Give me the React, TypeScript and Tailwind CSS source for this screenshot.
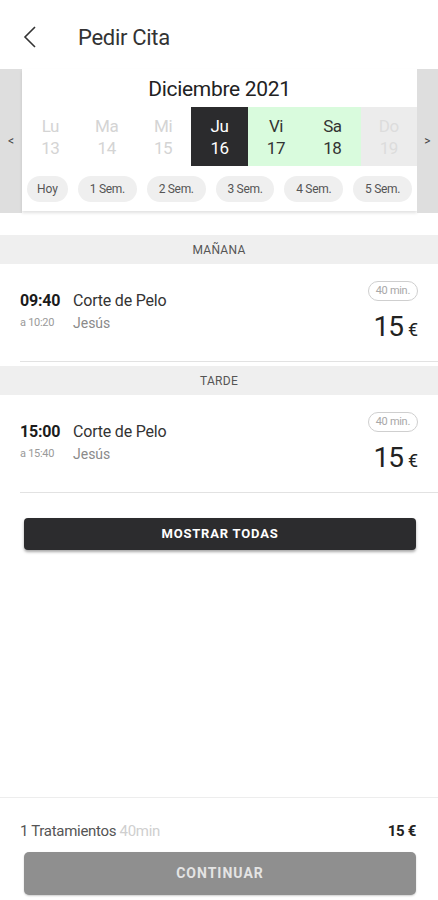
const font = { fontFamily: 'Roboto, "Liberation Sans", sans-serif' }

type Day = {
    name: string
    num: number
    className: string
}

type Slot = {
    start: string
    end: string
    service: string
    staff: string
}

const days: Day[] = [
    { name: 'Lu', num: 13, className: 'text-[#d4d4d4]' },
    { name: 'Ma', num: 14, className: 'text-[#d4d4d4]' },
    { name: 'Mi', num: 15, className: 'text-[#d4d4d4]' },
    { name: 'Ju', num: 16, className: 'bg-[#2b2b2d] text-white' },
    { name: 'Vi', num: 17, className: 'bg-[#d9fbdd] text-[#333]' },
    { name: 'Sa', num: 18, className: 'bg-[#d9fbdd] text-[#333]' },
    { name: 'Do', num: 19, className: 'bg-[#ececec] text-[#dcdcdc]' },
]

const weeks = ['1 Sem.', '2 Sem.', '3 Sem.', '4 Sem.', '5 Sem.']

function SlotRow({ slot }: { slot: Slot }) {
    return (
        <div>
            <div className="flex justify-between pl-[20px] pr-[20px] h-[97px]">
                <div className="pt-[27px]">
                    <div className="flex items-center h-[20px] text-[16px] tracking-[-0.2px]">
                        <span className="font-bold text-[#1b1b1b] w-[53px]">{slot.start}</span>
                        <span className="text-[#333]">{slot.service}</span>
                    </div>
                    <div className="flex items-center h-[18px] mt-[3px]">
                        <span className="text-[11px] text-[#9a9a9a] w-[53px] tracking-[-0.3px]">a {slot.end}</span>
                        <span className="text-[14px] text-[#8a8a8a]">{slot.staff}</span>
                    </div>
                </div>
                <div className="pt-[17px] flex flex-col items-end">
                    <div className="h-[20px] px-[7px] border border-[#cfcfcf] rounded-full text-[11px] text-[#a8a8a8] flex items-center tracking-[-0.3px]">40 min.</div>
                    <div className="mt-[11px] h-[30px] flex items-baseline text-[#222]">
                        <span className="text-[28px] leading-[30px] tracking-[-1px]">15</span>
                        <span className="text-[18px] ml-[5px]">€</span>
                    </div>
                </div>
            </div>
            <div className="ml-[20px] border-t border-[#e2e2e2]"></div>
        </div>
    )
}

function SectionBar({ title }: { title: string }) {
    return (
        <div className="h-[29px] bg-[#efefef] flex items-center justify-center text-[12px] text-[#555] tracking-[0.3px]">
            {title}
        </div>
    )
}

export default function App() {
    return (
        <div style={font} className="w-[438px] h-[900px] bg-white flex flex-col overflow-hidden">
            {/* Header */}
            <div className="h-[69px] flex items-center pt-[5px]">
                <svg width="16" height="22" viewBox="0 0 16 22" className="ml-[22px]">
                    <path d="M13 1 L3 11 L13 21" fill="none" stroke="#333" strokeWidth="1.6" />
                </svg>
                <span className="ml-[40px] text-[22px] text-[#333] tracking-[-0.3px]">Pedir Cita</span>
            </div>

            {/* Calendar */}
            <div className="flex h-[144px]">
                <div className="w-[22px] bg-[#dedede] flex items-center justify-center text-[12px] text-[#444]">&lt;</div>
                <div className="flex-1 bg-white shadow-[0_2px_3px_rgba(0,0,0,0.12)] mb-[2px]">
                    <div className="h-[38px] flex items-center justify-center text-[21px] text-[#222] pt-[4px] tracking-[-0.3px]">Diciembre 2021</div>
                    <div className="grid grid-cols-7 h-[59px]">
                        {days.map((d, i) => (
                            <div key={i} className={`flex flex-col items-center justify-center text-[17px] leading-[22px] tracking-[-0.5px] ${d.className}`}>
                                <span>{d.name}</span>
                                <span>{d.num}</span>
                            </div>
                        ))}
                    </div>
                    <div className="flex gap-[10px] px-[5px] pt-[10px]">
                        <div className="w-[41px] h-[26px] rounded-full bg-[#efefef] flex items-center justify-center text-[12px] text-[#555]">Hoy</div>
                        {weeks.map((w, i) => (
                            <div key={i} className="flex-1 h-[26px] rounded-full bg-[#efefef] flex items-center justify-center text-[12px] text-[#555] tracking-[-0.3px]">{w}</div>
                        ))}
                    </div>
                </div>
                <div className="w-[21px] bg-[#dedede] flex items-center justify-center text-[12px] text-[#444]">&gt;</div>
            </div>

            <div className="mt-[22px]">
                <SectionBar title="MAÑANA" />
                <SlotRow slot={{ start: '09:40', end: '10:20', service: 'Corte de Pelo', staff: 'Jesús' }} />
                <div className="mt-[4px]">
                    <SectionBar title="TARDE" />
                </div>
                <SlotRow slot={{ start: '15:00', end: '15:40', service: 'Corte de Pelo', staff: 'Jesús' }} />
            </div>

            <div className="px-[24px] pr-[22px] mt-[25px]">
                <button className="w-full h-[32px] rounded-[4px] bg-[#2c2c2e] text-white text-[13px] font-bold tracking-[0.8px] shadow-[0_2px_3px_rgba(0,0,0,0.35)]">
                    MOSTRAR TODAS
                </button>
            </div>

            {/* Footer */}
            <div className="mt-auto border-t border-[#ededed] pt-[23px] pb-[5px]">
                <div className="flex justify-between items-center px-[20px] pr-[22px] h-[20px] text-[15px] tracking-[-0.3px]">
                    <div className="text-[#555]">1 Tratamientos <span className="text-[#cfcfcf]">40min</span></div>
                    <div className="font-bold text-[#222]">15 €</div>
                </div>
                <div className="px-[24px] pr-[22px] mt-[11px]">
                    <button className="w-full h-[43px] rounded-[5px] bg-[#8f8f8f] text-[#e4e4e4] text-[14px] font-bold tracking-[1px] shadow-[0_1px_2px_rgba(0,0,0,0.2)]">
                        CONTINUAR
                    </button>
                </div>
            </div>
        </div>
    )
}
